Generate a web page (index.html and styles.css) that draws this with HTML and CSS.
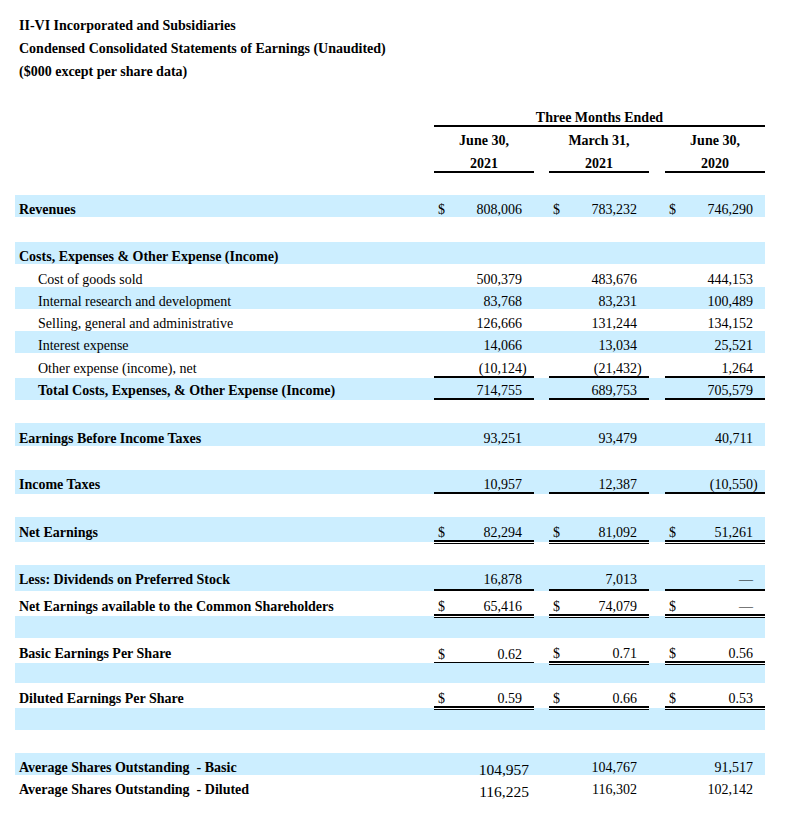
FILE: index.html
```html
<!DOCTYPE html>
<html>
<head>
<meta charset="utf-8">
<link rel="stylesheet" href="styles.css">
</head>
<body>
<div class="sheet">
  <div class="titles">
    <div>II-VI Incorporated and Subsidiaries</div>
    <div>Condensed Consolidated Statements of Earnings (Unaudited)</div>
    <div>($000 except per share data)</div>
  </div>

  <div class="table">
    <div class="row h24 head">
      <div class="span ruled">Three Months Ended</div>
    </div>
    <div class="row h21 head">
      <div class="hc c1">June 30,</div>
      <div class="hc c2">March 31,</div>
      <div class="hc c3">June 30,</div>
    </div>
    <div class="row h25 head">
      <div class="hc c1 ruled">2021</div>
      <div class="hc c2 ruled">2021</div>
      <div class="hc c3 ruled">2020</div>
    </div>
    <div class="row h22"></div>

    <div class="row h22 shade">
      <div class="label b">Revenues</div>
      <div class="num c1"><span>$</span><span class="v">808,006</span></div>
      <div class="num c2"><span>$</span><span class="v">783,232</span></div>
      <div class="num c3"><span>$</span><span class="v">746,290</span></div>
    </div>
    <div class="row h25"></div>

    <div class="row h22 shade">
      <div class="label b">Costs, Expenses &amp; Other Expense (Income)</div>
    </div>
    <div class="row h23">
      <div class="label ind">Cost of goods sold</div>
      <div class="num c1"><span class="v">500,379</span></div>
      <div class="num c2"><span class="v">483,676</span></div>
      <div class="num c3"><span class="v">444,153</span></div>
    </div>
    <div class="row h22 shade">
      <div class="label ind">Internal research and development</div>
      <div class="num c1"><span class="v">83,768</span></div>
      <div class="num c2"><span class="v">83,231</span></div>
      <div class="num c3"><span class="v">100,489</span></div>
    </div>
    <div class="row h22">
      <div class="label ind">Selling, general and administrative</div>
      <div class="num c1"><span class="v">126,666</span></div>
      <div class="num c2"><span class="v">131,244</span></div>
      <div class="num c3"><span class="v">134,152</span></div>
    </div>
    <div class="row h22 shade">
      <div class="label ind">Interest expense</div>
      <div class="num c1"><span class="v">14,066</span></div>
      <div class="num c2"><span class="v">13,034</span></div>
      <div class="num c3"><span class="v">25,521</span></div>
    </div>
    <div class="row h25 rl">
      <div class="label ind">Other expense (income), net</div>
      <div class="num c1 ruled"><span class="v neg">(10,124)</span></div>
      <div class="num c2 ruled"><span class="v neg">(21,432)</span></div>
      <div class="num c3 ruled"><span class="v">1,264</span></div>
    </div>
    <div class="row h22 shade rl">
      <div class="label ind b">Total Costs, Expenses, &amp; Other Expense (Income)</div>
      <div class="num c1 ruled"><span class="v">714,755</span></div>
      <div class="num c2 ruled"><span class="v">689,753</span></div>
      <div class="num c3 ruled"><span class="v">705,579</span></div>
    </div>
    <div class="row h23"></div>

    <div class="row h23 shade">
      <div class="label b">Earnings Before Income Taxes</div>
      <div class="num c1"><span class="v">93,251</span></div>
      <div class="num c2"><span class="v">93,479</span></div>
      <div class="num c3"><span class="v">40,711</span></div>
    </div>
    <div class="row h24"></div>

    <div class="row h24 shade rl">
      <div class="label b">Income Taxes</div>
      <div class="num c1 ruled"><span class="v">10,957</span></div>
      <div class="num c2 ruled"><span class="v">12,387</span></div>
      <div class="num c3 ruled"><span class="v neg">(10,550)</span></div>
    </div>
    <div class="row h23"></div>

    <div class="row h25 shade rl">
      <div class="label b">Net Earnings</div>
      <div class="num c1 dbl"><span>$</span><span class="v">82,294</span></div>
      <div class="num c2 dbl"><span>$</span><span class="v">81,092</span></div>
      <div class="num c3 dbl"><span>$</span><span class="v">51,261</span></div>
    </div>
    <div class="row h23"></div>

    <div class="row h26 shade rl lifted">
      <div class="label b">Less: Dividends on Preferred Stock</div>
      <div class="num c1 ruled"><span class="v">16,878</span></div>
      <div class="num c2 ruled"><span class="v">7,013</span></div>
      <div class="num c3 ruled"><span class="v">—</span></div>
    </div>
    <div class="row h25 rl">
      <div class="label b">Net Earnings available to the Common Shareholders</div>
      <div class="num c1 dbl"><span>$</span><span class="v">65,416</span></div>
      <div class="num c2 dbl"><span>$</span><span class="v">74,079</span></div>
      <div class="num c3 dbl"><span>$</span><span class="v">—</span></div>
    </div>
    <div class="row h22 shade"></div>

    <div class="row h25 rl">
      <div class="label b">Basic Earnings Per Share</div>
      <div class="num c1 ruled thin"><span>$</span><span class="v">0.62</span></div>
      <div class="num c2 dbl"><span>$</span><span class="v">0.71</span></div>
      <div class="num c3 dbl"><span>$</span><span class="v">0.56</span></div>
    </div>
    <div class="row h20 shade"></div>

    <div class="row h25 rl">
      <div class="label b">Diluted Earnings Per Share</div>
      <div class="num c1 dbl"><span>$</span><span class="v">0.59</span></div>
      <div class="num c2 dbl"><span>$</span><span class="v">0.66</span></div>
      <div class="num c3 dbl"><span>$</span><span class="v">0.53</span></div>
    </div>
    <div class="row h22 shade"></div>
    <div class="row h23"></div>

    <div class="row h22 shade">
      <div class="label b keep">Average Shares Outstanding  - Basic</div>
      <div class="num c1"><span class="v big">104,957</span></div>
      <div class="num c2"><span class="v">104,767</span></div>
      <div class="num c3"><span class="v">91,517</span></div>
    </div>
    <div class="row h22">
      <div class="label b keep">Average Shares Outstanding  - Diluted</div>
      <div class="num c1"><span class="v big">116,225</span></div>
      <div class="num c2"><span class="v">116,302</span></div>
      <div class="num c3"><span class="v">102,142</span></div>
    </div>
  </div>
</div>
</body>
</html>
```

FILE: styles.css
```css
* {
  box-sizing: border-box;
}

body {
  margin: 0;
  background: #ffffff;
  color: #000000;
  font-family: "Liberation Serif", "Times New Roman", serif;
  font-size: 14px;
}

.sheet {
  width: 786px;
  padding: 14px 0 23px 15px;
}

.titles {
  padding-left: 4px;
  font-weight: bold;
  line-height: 23px;
}

.table {
  margin-top: 20px;
  width: 750px;
}

.row {
  display: grid;
  grid-template-columns: 419px 100px 15px 100px 16px 100px;
  height: 22px;
  line-height: 14px;
}

.row > * {
  display: flex;
  align-items: flex-end;
  white-space: nowrap;
}

.h20 { height: 20px; }
.h21 { height: 21px; }
.h22 { height: 22px; }
.h23 { height: 23px; }
.h24 { height: 24px; }
.h25 { height: 25px; }
.h26 { height: 26px; }

.shade {
  background: #cceeff;
}

.label {
  grid-column: 1;
  padding-left: 4px;
}

.rl .label {
  padding-bottom: 2px;
}

.ind {
  padding-left: 23px;
}

.b {
  font-weight: bold;
}

.keep {
  white-space: pre;
}

.c1 { grid-column: 2; }
.c2 { grid-column: 4; }
.c3 { grid-column: 6; }

.head {
  font-weight: bold;
}

.span {
  grid-column: 2 / 7;
  justify-content: center;
}

.hc {
  justify-content: center;
}

.num {
  padding: 0 12px 0 4px;
}

.num .v {
  margin-left: auto;
}

.neg {
  margin-right: -4.7px;
}

.big {
  font-size: 15.5px;
  margin-right: -7px;
  margin-bottom: -2px;
}

.ruled {
  border-bottom: 2px solid #000000;
}

.ruled.thin {
  border-bottom-width: 1.5px;
}

.lifted > * {
  padding-bottom: 2px;
}

.lifted .label {
  padding-bottom: 4px;
}

.dbl {
  border-bottom: 2px solid #000000;
  box-shadow: 0 1px 0 #ffffff, 0 2px 0 #000000;
}
```
